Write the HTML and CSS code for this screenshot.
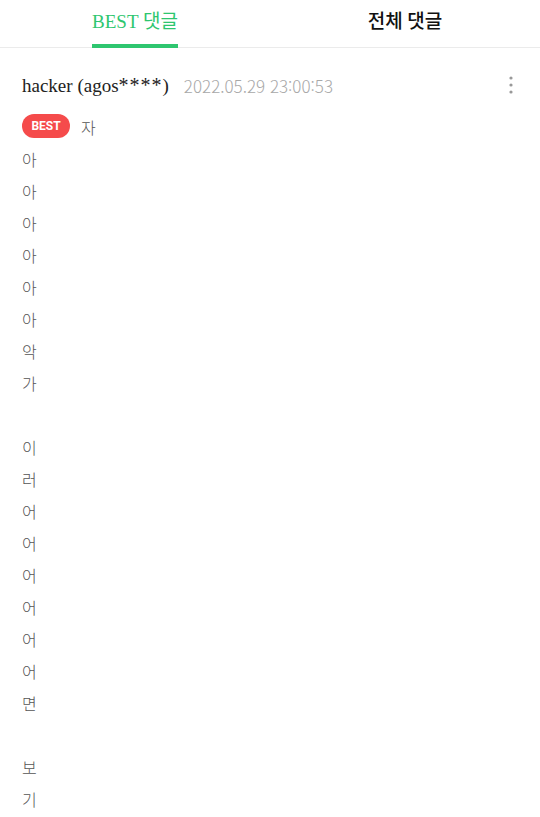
FILE: index.html
```html
<!DOCTYPE html>
<html lang="ko">
  <head>
    <meta charset="UTF-8" />
    <meta name="viewport" content="width=device-width, initial-scale=1.0" />
    <title>댓글</title>
    <link rel="stylesheet" href="styles.css">
  </head>
  <body>
    <div class="tabs">
      <a href="javascript:" class="tab active"><span>BEST 댓글</span></a>
      <a href="javascript:" class="tab"><span>전체 댓글</span></a>
    </div>
    <div class="comment">
      <div class="head">
        <span class="user">hacker (agos<i class="mask">****</i>)</span>
        <span class="date">2022.05.29 23:00:53</span>
        <a href="javascript:" class="more">
          <svg width="4" height="18" viewBox="0 0 4 18">
            <circle cx="2" cy="2" r="1.6" fill="#999" />
            <circle cx="2" cy="9" r="1.6" fill="#999" />
            <circle cx="2" cy="16" r="1.6" fill="#999" />
          </svg>
        </a>
      </div>
      <div class="body">
        <div class="first">
          <span class="badge">BEST</span>
          <span>자</span>
        </div>
        <p class="text">아
아
아
아
아
아
악
가

이
러
어
어
어
어
어
어
면

보
기</p>
      </div>
    </div>
  </body>
</html>
```

FILE: styles.css
```css
* {
  margin: 0;
  padding: 0;
  box-sizing: border-box;
}
body {
  width: 540px;
  background: #fff;
  font-family: "Liberation Serif", "Noto Sans CJK KR", serif;
  color: #222;
}
a {
  text-decoration: none;
  color: inherit;
}
.tabs {
  display: flex;
  height: 48px;
  border-bottom: 1px solid #ebebeb;
}
.tab {
  flex: 1;
  display: flex;
  justify-content: center;
  font-size: 19px;
  color: #111;
}
.tab span {
  display: block;
  height: 48px;
  padding: 6px 0 0;
  border-bottom: 4px solid transparent;
}
.tab.active span {
  color: #2ec66f;
  border-bottom-color: #2ec66f;
}
.tab:not(.active) span {
  font-weight: 500;
}
.comment {
  padding: 0 22px;
}
.head {
  display: flex;
  align-items: center;
  height: 76px;
  padding-bottom: 2px;
}
.user {
  font-size: 19px;
  color: #222;
}
.mask {
  font-style: normal;
  letter-spacing: 1px;
  font-size: 20px;
}
.date {
  margin-left: 15px;
  font-family: "Noto Sans CJK KR", sans-serif;
  font-weight: 300;
  font-size: 17px;
  color: #a8a8a8;
}
.more {
  margin-left: auto;
  margin-right: 5px;
  display: flex;
}
.body {
  margin-top: -13px;
  font-family: "Noto Sans CJK KR", sans-serif;
  font-weight: 300;
  font-size: 16px;
  line-height: 32px;
  color: #555;
}
.first {
  display: flex;
  align-items: center;
  gap: 11px;
  height: 32px;
}
.text {
  white-space: pre-line;
}
.badge {
  width: 48px;
  height: 24px;
  line-height: 24px;
  margin-top: -2px;
  border-radius: 12px;
  background: #f54b4b;
  color: #fff;
  font-family: "Roboto", "Noto Sans", sans-serif;
  font-weight: 700;
  font-size: 12px;
  text-align: center;
}
```
